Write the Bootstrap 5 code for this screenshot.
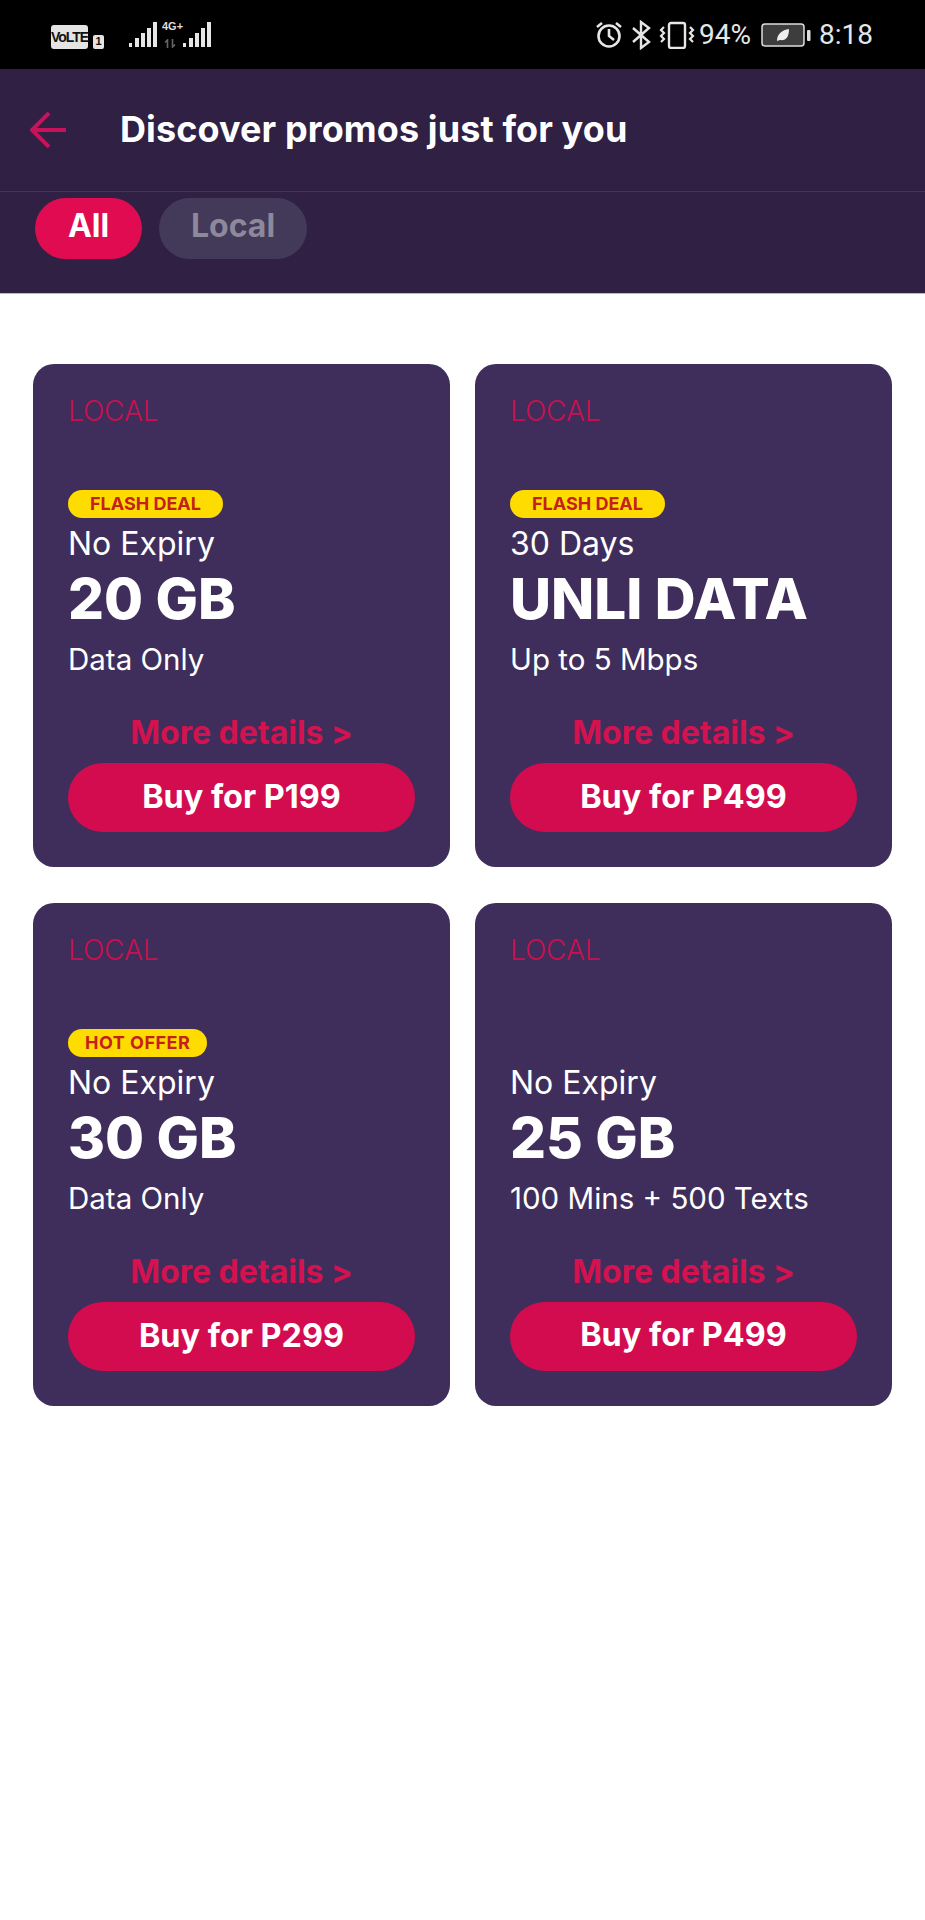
<!DOCTYPE html>
<html lang="en"><head><meta charset="utf-8"><title>Promos</title>
<link href="https://cdn.jsdelivr.net/npm/bootstrap@5.3.0/dist/css/bootstrap.min.css" rel="stylesheet">
<style>
body{font-family:Inter,Lato,"Liberation Sans",sans-serif;background:#fff;color:#fff;min-height:1920px}
.sbar{height:69px;background:#000;padding:0 52px 0 51px;font-family:Roboto,sans-serif;color:#e6e6e6}
.volte{background:#e4e4e4;color:#111;font:700 14px/1 "Liberation Sans",sans-serif;letter-spacing:-1px;width:37px;height:24px;border-radius:3px}
.simn{background:#e4e4e4;color:#111;font:700 11px/1 "Liberation Sans",sans-serif;width:11px;height:14px;border-radius:2px;margin-left:5px}
.net{font:700 11px/1 "Liberation Sans",sans-serif;color:#ddd}
.netdir{bottom:1px;left:6px}
.stxt{font-size:28px;font-weight:400;line-height:1}
.batt{margin-left:10px}
.clock{margin-left:6px}
.hdr{background:#2f2044;height:123px;border-bottom:1px solid #43364f;padding-left:30px}
.hdr h1{font-size:36px;font-weight:700;margin:0 0 3px 54px;color:#fff;line-height:1;letter-spacing:.1px}
.tabsbar{background:#2f2044;height:102px;padding:6px 0 0 35px;border-bottom:1px solid #bdb8c4}
.pill{height:61px;border-radius:31px;font-size:32px;font-weight:700;line-height:46px;border:0;padding:0 0 6px}
.pill-on{background:#e00b50;color:#fff;width:107px;text-align:center}
.pill-off{background:#433a59;color:#8e889b;width:148px;text-align:center;margin-left:17px}
.offers{display:grid;grid-template-columns:417px 417px;column-gap:25px;row-gap:36px;padding:70px 33px 0}
.offer{background:#3f2e5b;border-radius:21px;height:503px;padding:32px 35px 35px;border:0;color:#fff}
.tagline{color:#c8104f;font-size:28px;font-weight:300;line-height:30px;height:30px;letter-spacing:-.1px}
.slot{height:28px;margin-top:64px}
.flag{display:inline-block;background:#ffdc00;color:#c4201f;font-size:18px;font-weight:700;line-height:28px;height:28px;border-radius:14px;padding:0 22px;vertical-align:top}
.flag-hot{padding:0 17px;letter-spacing:.5px}
.term{font-size:32px;line-height:40px;margin-top:6px;font-weight:400}
.amt{font-size:56.5px;font-weight:800;line-height:70px;white-space:nowrap}
.sub{font-size:29.5px;line-height:40px;margin-top:5px;font-weight:400}
.more{color:#d3124f;font-size:32px;font-weight:700;text-align:center;line-height:40px;margin-top:34px}
.buy{display:block;width:100%;background:#d30c50;color:#fff;font-size:32.4px;font-weight:700;border:0;border-radius:35px;height:70px;line-height:66px;padding:0 0 2px;margin-top:10px}
</style></head>
<body>
<div class="sbar d-flex align-items-center justify-content-between">
  <div class="d-flex align-items-end">
    <div class="volte d-flex align-items-center justify-content-center">VoLTE</div>
    <div class="simn d-flex align-items-center justify-content-center">1</div>
    <svg width="30" height="28" viewBox="0 0 30 28" class="ms-4" fill="#e6e6e6"><rect x="1" y="22" width="3" height="4"/><rect x="7" y="17" width="4" height="9"/><rect x="13" y="12" width="4" height="14"/><rect x="19" y="7" width="4" height="19"/><rect x="25" y="1" width="4" height="25"/></svg>
    <div class="position-relative" style="width:24px;height:28px"><span class="net position-absolute top-0 start-0 ps-1">4G+</span>
      <svg class="position-absolute netdir" width="12" height="9" viewBox="0 0 12 9" fill="none" stroke="#666" stroke-width="1.6"><path d="M3.5 9V1L1 3.5M8.500 0v8l2.500-2.500"/></svg></div>
    <svg width="30" height="28" viewBox="0 0 30 28" fill="#e6e6e6"><rect x="1" y="22" width="3" height="4"/><rect x="7" y="17" width="4" height="9"/><rect x="13" y="12" width="4" height="14"/><rect x="19" y="7" width="4" height="19"/><rect x="25" y="1" width="4" height="25"/></svg>
  </div>
  <div class="d-flex align-items-center">
    <svg width="28" height="28" viewBox="0 0 28 28" fill="none" stroke="#e6e6e6" stroke-width="2.6"><circle cx="14" cy="15" r="10.500"/><path d="M14 8v7l5 4M2 6l5-4M26 6l-5-4"/></svg>
    <svg width="20" height="30" viewBox="0 0 20 30" class="ms-2" fill="none" stroke="#e6e6e6" stroke-width="2.4"><path d="M2 8l16 14-8 6V2l8 6L2 22"/></svg>
    <svg width="36" height="28" viewBox="0 0 36 28" class="ms-2" fill="none" stroke="#e6e6e6" stroke-width="2.4"><rect x="10" y="2" width="16" height="25" rx="2"/><path d="M5 6L2 9l3 3-3 3 3 3-3 3M31 6l3 3-3 3 3 3-3 3 3 3" stroke-width="2.2"/></svg>
    <span class="stxt ms-1">94%</span>
    <svg width="52" height="24" viewBox="0 0 52 24" class="batt"><rect x="1" y="1" width="42" height="22" rx="3" fill="#3d3d3d" stroke="#ddd" stroke-width="1.5"/><rect x="46" y="7" width="3.500" height="11" rx="1" fill="#ddd"/><path d="M16 18c0-7 5-11 12-12 0 8-3 12-9 11z" fill="#eee"/></svg>
    <span class="stxt clock">8:18</span>
  </div>
</div>
<div class="hdr d-flex align-items-center">
  <svg width="36" height="36" viewBox="0 0 36 36" fill="none" stroke="#c8125a" stroke-width="4"><path d="M1 18h35M19 1 2 18l17 17"/></svg>
  <h1>Discover promos just for you</h1>
</div>
<div class="tabsbar d-flex align-items-start">
  <button type="button" class="btn pill pill-on">All</button>
  <button type="button" class="btn pill pill-off">Local</button>
</div>
<main class="offers">
  <div class="card offer"><div class="tagline">LOCAL</div><div class="slot"><span class="flag">FLASH DEAL</span></div><div class="term">No Expiry</div><div class="amt">20 GB</div><div class="sub">Data Only</div><div class="more">More details &gt;</div><button type="button" class="btn buy">Buy for P199</button></div>
  <div class="card offer"><div class="tagline">LOCAL</div><div class="slot"><span class="flag">FLASH DEAL</span></div><div class="term">30 Days</div><div class="amt">UNLI DATA</div><div class="sub">Up to 5 Mbps</div><div class="more">More details &gt;</div><button type="button" class="btn buy">Buy for P499</button></div>
  <div class="card offer"><div class="tagline">LOCAL</div><div class="slot"><span class="flag flag-hot">HOT OFFER</span></div><div class="term">No Expiry</div><div class="amt">30 GB</div><div class="sub">Data Only</div><div class="more">More details &gt;</div><button type="button" class="btn buy">Buy for P299</button></div>
  <div class="card offer"><div class="tagline">LOCAL</div><div class="slot"></div><div class="term">No Expiry</div><div class="amt">25 GB</div><div class="sub">100 Mins + 500 Texts</div><div class="more">More details &gt;</div><button type="button" class="btn buy">Buy for P499</button></div>
</main>
<script src="https://cdn.jsdelivr.net/npm/bootstrap@5.3.0/dist/js/bootstrap.bundle.min.js"></script>
</body></html>
